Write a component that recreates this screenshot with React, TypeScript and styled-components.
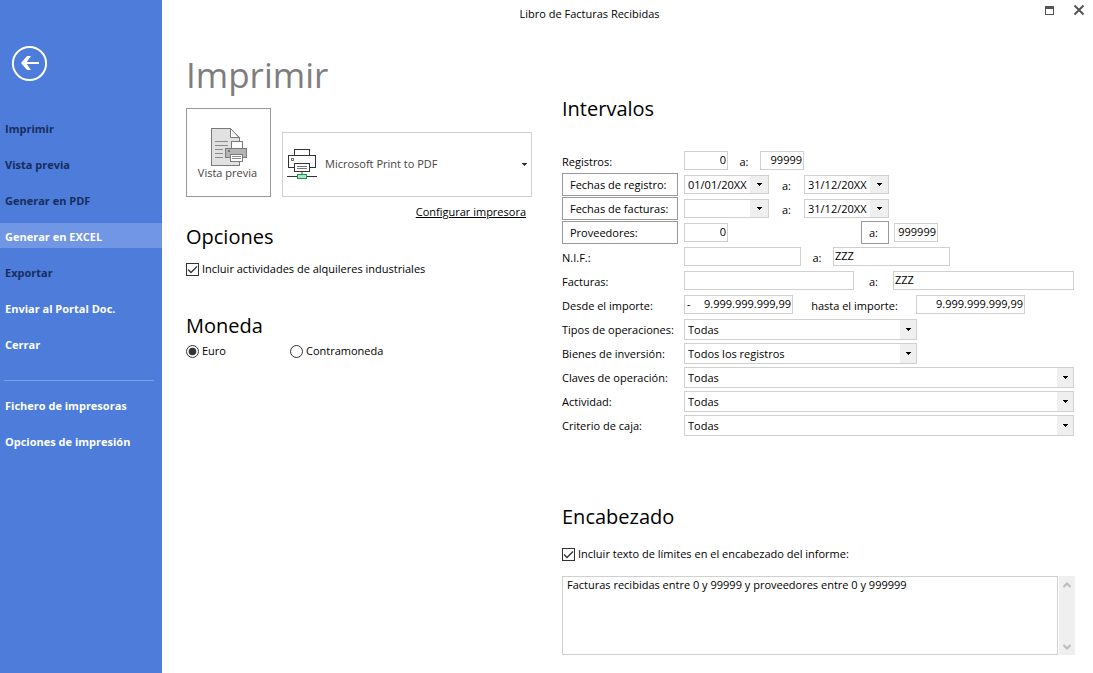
import React from 'react';
import styled, { createGlobalStyle } from 'styled-components';

const GlobalStyle = createGlobalStyle`
  *, *::before, *::after { box-sizing: border-box; }
  body { margin: 0; background: #fff; }
  body, button, input, select, textarea {
    font-family: 'Open Sans', 'Noto Sans', sans-serif;
    font-size: 11px;
    line-height: 16px;
    color: #000;
  }
  button, input, select, textarea { margin: 0; border-radius: 0; }
`;

const Page = styled.div`
  display: flex;
  min-height: 100vh;
`;

/* ---------- sidebar ---------- */

const Sidebar = styled.nav`
  flex: 0 0 162px;
  padding-top: 45px;
  background: #4d7cdb;
`;

const BackButton = styled.button`
  display: block;
  width: 37px;
  height: 37px;
  margin: 0 0 33px 11px;
  padding: 0;
  border: 0;
  background: none;
`;

const Menu = styled.ul`
  display: flex;
  flex-direction: column;
  gap: 11px;
  margin: 0;
  padding: 0;
  list-style: none;
`;

const MenuButton = styled.button<{ $dark?: boolean; $active?: boolean }>`
  display: block;
  width: 100%;
  height: 25px;
  padding: 2px 5px 0;
  border: 0;
  background: ${p => (p.$active ? '#7096e4' : 'transparent')};
  color: ${p => (p.$dark ? '#172d5c' : '#fff')};
  font-weight: 700;
  text-align: left;
`;

const Divider = styled.hr`
  height: 1px;
  margin: 24px 8px 11px 4px;
  border: 0;
  background: #7f9fe4;
`;

/* ---------- main area ---------- */

const Main = styled.main`
  flex: 1;
  min-width: 0;
`;

const TitleBar = styled.header`
  display: flex;
  height: 28px;
`;

const WindowTitle = styled.div`
  flex: 1;
  padding-top: 6px;
  text-align: center;
`;

const WindowControls = styled.div`
  display: flex;
  gap: 13px;
  width: 76px;
  padding: 2px 6px 0 24px;
`;

const WindowButton = styled.button`
  width: 17px;
  height: 17px;
  padding: 0;
  border: 0;
  background: none;
`;

const Columns = styled.div`
  display: flex;
  gap: 30px;
  padding: 20px 19px 18px 24px;
`;

const LeftColumn = styled.section`
  flex: 0 0 346px;
`;

const RightColumn = styled.section`
  flex: 1;
  min-width: 0;
  padding-top: 47px;
`;

const PageTitle = styled.h1`
  height: 54px;
  margin: 0 0 6px;
  color: #7f7c7f;
  font-size: 35px;
  font-weight: 400;
  line-height: 54px;
`;

const Heading = styled.h2<{ $before?: number; $after: number }>`
  margin: ${p => p.$before ?? 0}px 0 ${p => p.$after}px;
  font-size: 20px;
  font-weight: 400;
  line-height: 28px;
`;

const PrinterRow = styled.div`
  display: flex;
  align-items: flex-end;
  gap: 11px;
`;

const PreviewButton = styled.button`
  display: flex;
  flex-direction: column;
  align-items: center;
  width: 85px;
  height: 89px;
  padding: 19px 2px 0 0;
  border: 1px solid #999;
  background: #fff;
  color: #444;
  line-height: 14px;

  > svg { margin-left: 4px; }
`;

const PrinterPicker = styled.div`
  display: grid;
  flex: 1;
  height: 65px;
  align-items: center;

  > * { grid-area: 1 / 1; }
  > svg { pointer-events: none; margin-left: 5px; }
  > svg:last-child { justify-self: end; margin-right: 5px; }
`;

const PrinterSelect = styled.select`
  appearance: none;
  width: 100%;
  height: 100%;
  padding: 0 20px 2px 42px;
  border: 1px solid #d0d0d0;
  background: #fff;
  color: #444;
`;

const LinkLine = styled.p`
  margin: 7px 6px 0 0;
  text-align: right;

  a { color: #000; }
`;

const Check = styled.label`
  display: flex;
  align-items: center;
  gap: 3px;
  height: 16px;
`;

const Box = styled.span`
  display: grid;
  width: 13px;
  height: 13px;

  > * { grid-area: 1 / 1; }
  > svg { pointer-events: none; visibility: hidden; }
  > input:checked + svg { visibility: visible; }
`;

const Tick = styled.input<{ $round?: boolean }>`
  appearance: none;
  width: 13px;
  height: 13px;
  border: 1px solid #333;
  border-radius: ${p => (p.$round ? '50%' : '0')};
  background: #fff;
`;

const RadioGroup = styled.div`
  display: grid;
  grid-template-columns: 104px auto;
`;

/* ---------- interval form ---------- */

const Row = styled.div`
  display: grid;
  grid-template-columns: 116px minmax(0, 1fr);
  column-gap: 6px;
  height: 24px;
`;

const RowLabel = styled.label`
  padding-top: 5px;
  white-space: nowrap;
`;

const LabelButton = styled.button<{ $narrow?: boolean }>`
  width: ${p => (p.$narrow ? '28px' : '116px')};
  height: 23px;
  padding: 0 7px;
  border: 1px solid #999;
  background: #fff;
  text-align: left;
`;

const Fields = styled.div`
  display: flex;
  padding-top: 2px;
`;

const ProviderTo = styled.div`
  display: flex;
  gap: 5px;
  margin: -2px 0 0 133px;

  > input { margin-top: 2px; }
`;

const Until = styled.label<{ $w: number }>`
  flex: 0 0 ${p => p.$w}px;
  padding-top: 3px;
  text-align: center;
`;

const TextField = styled.input<{ $w?: number; $right?: boolean }>`
  ${p => (p.$w ? `width: ${p.$w}px;` : 'flex: 1; min-width: 0;')}
  height: 19px;
  padding: 0 1px 2px;
  border: 1px solid #d0d0d0;
  background: #fff;
  text-align: ${p => (p.$right ? 'right' : 'left')};
`;

const Framed = styled.div<{ $w: number }>`
  display: flex;
  width: ${p => p.$w}px;
  height: 19px;
  border: 1px solid #d0d0d0;

  > span { padding-left: 2px; }
`;

const FramedInput = styled.input<{ $amount?: boolean }>`
  flex: 1;
  min-width: 0;
  height: 17px;
  padding: ${p => (p.$amount ? '0 1px 2px' : '0 0 0 3px')};
  border: 0;
  background: none;
  text-align: ${p => (p.$amount ? 'right' : 'left')};
`;

const DropButton = styled.button`
  display: grid;
  place-items: center;
  flex: 0 0 18px;
  height: 17px;
  padding: 0;
  border: 0;
  background: #efefef;
`;

const Combo = styled.div<{ $w?: number }>`
  display: grid;
  ${p => (p.$w ? `width: ${p.$w}px;` : 'flex: 1;')}
  height: 21px;
  align-items: center;

  > * { grid-area: 1 / 1; }
`;

const ComboSelect = styled.select`
  appearance: none;
  width: 100%;
  height: 21px;
  padding: 0 20px 0 3px;
  border: 1px solid #d0d0d0;
  background: #fff;
`;

const ComboArrow = styled.span`
  display: grid;
  place-items: center;
  justify-self: end;
  width: 16px;
  height: 19px;
  margin-right: 1px;
  background: #efefef;
  pointer-events: none;
`;

const MemoRow = styled.div`
  display: flex;
  gap: 1px;
  height: 79px;
  margin: 14px -1px 0 0;
`;

const Memo = styled.textarea`
  flex: 1;
  min-width: 0;
  padding: 0 4px;
  border: 1px solid #d0d0d0;
  background: #fff;
  overflow: hidden;
  resize: none;
`;

const ScrollTrack = styled.div`
  display: flex;
  flex-direction: column;
  justify-content: space-between;
  width: 16px;
  background: #efefef;
`;

const ScrollButton = styled.button`
  display: grid;
  place-items: center;
  height: 17px;
  padding: 0;
  border: 0;
  background: none;
`;

/* ---------- drawings ---------- */

const Arrow = ({ color = '#000' }: { color?: string }) => (
  <svg width="5" height="3" viewBox="0 0 5 3" fill={color} shapeRendering="crispEdges" aria-hidden="true">
    <path d="M0 0h5v1H0zM1 1h3v1H1zM2 2h1v1H2z" />
  </svg>
);

const TickMark = () => (
  <svg width="13" height="13" viewBox="0 0 13 13" fill="none" stroke="#333" strokeWidth="1.3" aria-hidden="true">
    <path d="M2 6.5l3 3 6-6" />
  </svg>
);

const RadioDot = () => (
  <svg width="13" height="13" viewBox="0 0 13 13" aria-hidden="true">
    <circle cx="6.5" cy="6.5" r="3.8" fill="#333" />
  </svg>
);

const Chevron = ({ down }: { down?: boolean }) => (
  <svg width="8" height="6" viewBox="0 0 8 6" fill="none" stroke="#bcbcbc" strokeWidth="2" aria-hidden="true">
    <path d={down ? 'M.5 1L4 4.5 7.5 1' : 'M.5 5L4 1.5 7.5 5'} />
  </svg>
);

const PreviewIcon = () => (
  <svg width="37" height="38" viewBox="0 0 37 38" shapeRendering="crispEdges" aria-hidden="true">
    <path d="M.5.5H19.5L28 9V37.5H.5z" fill="#e1e1e1" stroke="#7a7a7a" />
    <path d="M19.5.5V9.5H28z" fill="#fff" stroke="#7a7a7a" shapeRendering="auto" />
    <path d="M4 13.5H17M4 17.5H17M4 21.5H12M4 25.5H12M4 29.5H12" stroke="#8a8a8a" />
    <path d="M20 13.5H31.5V21H20z" fill="#fff" stroke="#7a7a7a" />
    <path d="M14.5 20.5H35.5V29.5H14.5z" fill="#b4b4b4" stroke="#7a7a7a" />
    <path d="M17 22h2v2h-2z" fill="#777" />
    <path d="M19.5 26.5H31.5V33.5H19.5z" fill="#fff" stroke="#7a7a7a" />
    <path d="M21 28.5H30M21 30.5H30" stroke="#8a8a8a" />
  </svg>
);

const PrinterIcon = () => (
  <svg width="30" height="31" viewBox="0 0 30 31" fill="none" shapeRendering="crispEdges" aria-hidden="true">
    <path d="M7.5 7V.5H22.5V7" stroke="#333" />
    <path d="M7 18.5H1.5V6.5H28.5V18.5H23" stroke="#333" />
    <path d="M4.5 9.5h2v2h-2z" stroke="#777" />
    <path d="M7.5 14.5H22.5V22.5H7.5z" fill="#fff" stroke="#333" />
    <path d="M10 17.5H20M10 19.5H20" stroke="#777" />
    <path d="M15 23v3" stroke="#999" strokeWidth="2" />
    <path d="M0 27.5H10M20 27.5H30" stroke="#333" />
    <path d="M10.5 25.5H19.5V29.5H10.5z" fill="#b5dfc0" stroke="#0f9a45" />
  </svg>
);

const BackIcon = () => (
  <svg width="37" height="37" viewBox="0 0 37 37" fill="none" stroke="#fff" aria-hidden="true">
    <circle cx="18.5" cy="18.5" r="16.6" strokeWidth="2" />
    <path d="M12 18H28" strokeWidth="2" />
    <path d="M16 11h4l-5 7 5 7h-4l-6-7z" fill="#fff" stroke="none" />
  </svg>
);

/* ---------- composed controls ---------- */

const DateField = ({ id, value, label }: { id: string; value: string; label?: string }) => (
  <Framed $w={85}>
    <FramedInput id={id} type="text" defaultValue={value} aria-label={label} />
    <DropButton type="button" aria-label="Abrir calendario"><Arrow /></DropButton>
  </Framed>
);

const SelectRow = ({ id, label, value, w }: { id: string; label: string; value: string; w?: number }) => (
  <Row>
    <RowLabel htmlFor={id}>{label}</RowLabel>
    <Fields>
      <Combo $w={w}>
        <ComboSelect id={id} defaultValue={value}><option>{value}</option></ComboSelect>
        <ComboArrow><Arrow /></ComboArrow>
      </Combo>
    </Fields>
  </Row>
);

const menu = [
  { text: 'Imprimir', dark: true },
  { text: 'Vista previa', dark: true },
  { text: 'Generar en PDF', dark: true },
  { text: 'Generar en EXCEL', active: true },
  { text: 'Exportar', dark: true },
  { text: 'Enviar al Portal Doc.' },
  { text: 'Cerrar' },
];

const settings = ['Fichero de impresoras', 'Opciones de impresión'];

export default function App() {
  return (
    <Page>
      <GlobalStyle />
      <Sidebar>
        <BackButton type="button" aria-label="Volver"><BackIcon /></BackButton>
        <Menu>
          {menu.map(m => (
            <li key={m.text}>
              <MenuButton type="button" $dark={m.dark} $active={m.active}>{m.text}</MenuButton>
            </li>
          ))}
        </Menu>
        <Divider />
        <Menu>
          {settings.map(s => (
            <li key={s}><MenuButton type="button">{s}</MenuButton></li>
          ))}
        </Menu>
      </Sidebar>

      <Main>
        <TitleBar>
          <WindowTitle>Libro de Facturas Recibidas</WindowTitle>
          <WindowControls>
            <WindowButton type="button" aria-label="Maximizar">
              <svg width="17" height="17" viewBox="0 0 17 17" shapeRendering="crispEdges" aria-hidden="true">
                <path d="M4 4h9v9H4zM5 7v5h7V7z" fill="#555" fillRule="evenodd" />
              </svg>
            </WindowButton>
            <WindowButton type="button" aria-label="Cerrar ventana">
              <svg width="17" height="17" viewBox="0 0 17 17" aria-hidden="true">
                <path d="M3.5 3.5l9 9M12.5 3.5l-9 9" stroke="#555" strokeWidth="2" />
              </svg>
            </WindowButton>
          </WindowControls>
        </TitleBar>

        <Columns>
          <LeftColumn>
            <PageTitle>Imprimir</PageTitle>
            <PrinterRow>
              <PreviewButton type="button"><PreviewIcon />Vista previa</PreviewButton>
              <PrinterPicker>
                <PrinterSelect aria-label="Impresora">
                  <option>Microsoft Print to PDF</option>
                </PrinterSelect>
                <PrinterIcon />
                <Arrow color="#333" />
              </PrinterPicker>
            </PrinterRow>
            <LinkLine><a href="#configurar">Configurar impresora</a></LinkLine>

            <Heading $before={3} $after={10}>Opciones</Heading>
            <Check>
              <Box><Tick type="checkbox" defaultChecked /><TickMark /></Box>
              Incluir actividades de alquileres industriales
            </Check>

            <Heading $before={35} $after={3}>Moneda</Heading>
            <RadioGroup>
              <Check>
                <Box><Tick $round type="radio" name="moneda" defaultChecked /><RadioDot /></Box>
                Euro
              </Check>
              <Check>
                <Box><Tick $round type="radio" name="moneda" /><RadioDot /></Box>
                Contramoneda
              </Check>
            </RadioGroup>
          </LeftColumn>

          <RightColumn>
            <Heading $after={26}>Intervalos</Heading>
            <Row>
              <RowLabel htmlFor="reg-from">Registros:</RowLabel>
              <Fields>
                <TextField id="reg-from" $w={44} $right defaultValue="0" />
                <Until htmlFor="reg-to" $w={32}>a:</Until>
                <TextField id="reg-to" $w={44} $right defaultValue="99999" />
              </Fields>
            </Row>
            <Row>
              <LabelButton type="button">Fechas de registro:</LabelButton>
              <Fields>
                <DateField id="fr-from" value="01/01/20XX" label="Fecha de registro desde" />
                <Until htmlFor="fr-to" $w={35}>a:</Until>
                <DateField id="fr-to" value="31/12/20XX" />
              </Fields>
            </Row>
            <Row>
              <LabelButton type="button">Fechas de facturas:</LabelButton>
              <Fields>
                <DateField id="ff-from" value="" label="Fecha de factura desde" />
                <Until htmlFor="ff-to" $w={35}>a:</Until>
                <DateField id="ff-to" value="31/12/20XX" />
              </Fields>
            </Row>
            <Row>
              <LabelButton type="button">Proveedores:</LabelButton>
              <Fields>
                <TextField $w={44} $right defaultValue="0" aria-label="Proveedor desde" />
                <ProviderTo>
                  <LabelButton type="button" $narrow>a:</LabelButton>
                  <TextField $w={44} $right defaultValue="999999" aria-label="Proveedor hasta" />
                </ProviderTo>
              </Fields>
            </Row>
            <Row>
              <RowLabel htmlFor="nif-from">N.I.F.:</RowLabel>
              <Fields>
                <TextField id="nif-from" $w={117} />
                <Until htmlFor="nif-to" $w={32}>a:</Until>
                <TextField id="nif-to" $w={117} defaultValue="ZZZ" />
              </Fields>
            </Row>
            <Row>
              <RowLabel htmlFor="fac-from">Facturas:</RowLabel>
              <Fields>
                <TextField id="fac-from" $w={170} />
                <Until htmlFor="fac-to" $w={39}>a:</Until>
                <TextField id="fac-to" defaultValue="ZZZ" />
              </Fields>
            </Row>
            <Row>
              <RowLabel htmlFor="imp-from">Desde el importe:</RowLabel>
              <Fields>
                <Framed $w={109}>
                  <span>-</span>
                  <FramedInput $amount id="imp-from" type="text" defaultValue="9.999.999.999,99" />
                </Framed>
                <Until htmlFor="imp-to" $w={123}>hasta el importe:</Until>
                <Framed $w={109}>
                  <FramedInput $amount id="imp-to" type="text" defaultValue="9.999.999.999,99" />
                </Framed>
              </Fields>
            </Row>
            <SelectRow id="tipos" label="Tipos de operaciones:" value="Todas" w={233} />
            <SelectRow id="bienes" label="Bienes de inversión:" value="Todos los registros" w={233} />
            <SelectRow id="claves" label="Claves de operación:" value="Todas" />
            <SelectRow id="actividad" label="Actividad:" value="Todas" />
            <SelectRow id="criterio" label="Criterio de caja:" value="Todas" />

            <Heading $before={66} $after={15}>Encabezado</Heading>
            <Check>
              <Box><Tick type="checkbox" defaultChecked /><TickMark /></Box>
              Incluir texto de límites en el encabezado del informe:
            </Check>
            <MemoRow>
              <Memo
                aria-label="Texto del encabezado"
                defaultValue="Facturas recibidas entre 0 y 99999 y proveedores entre 0 y 999999"
              />
              <ScrollTrack>
                <ScrollButton type="button" aria-label="Subir"><Chevron /></ScrollButton>
                <ScrollButton type="button" aria-label="Bajar"><Chevron down /></ScrollButton>
              </ScrollTrack>
            </MemoRow>
          </RightColumn>
        </Columns>
      </Main>
    </Page>
  );
}
